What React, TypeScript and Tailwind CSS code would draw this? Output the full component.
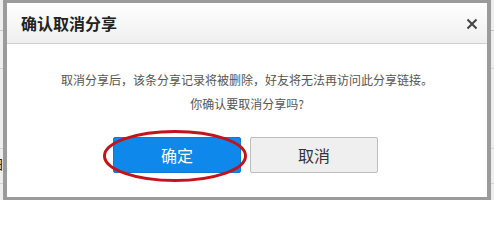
import React from "react";

function Strip({ left }: { left?: boolean }) {
  return (
    <div className="w-[3px] h-[200px] flex flex-col bg-[#eeeeee] relative overflow-hidden">
      <div className="h-[30px]" />
      <div className="h-px bg-[#c8c8c8]" />
      <div className="h-[37px]" />
      <div className="h-px bg-[#d4d4d4]" />
      <div className="h-[79px]" />
      <div className="h-px bg-[#d4d4d4]" />
      <div className="h-[34px]" />
      <div className="h-px bg-[#d4d4d4]" />
      {left && (
        <span className="absolute left-[-9px] top-[157px] text-[13px] leading-none text-[#222]">日</span>
      )}
    </div>
  );
}

export default function App() {
  return (
    <div
      className="w-[494px] h-[200px] bg-[#ececec] flex overflow-hidden"
      style={{ fontFamily: '"Microsoft YaHei", "Noto Sans CJK SC", sans-serif' }}
    >
      <Strip left />
      <div className="flex-1 flex flex-col border-x-[4px] border-t-[3px] border-b-[3px] border-[#9b9b9b] bg-white">
        <div className="h-[41px] flex items-center justify-between pl-[14px] pr-[9px] bg-gradient-to-b from-white to-[#efefef] border-b border-[#cfcfcf]">
          <span className="text-[16px] font-bold text-[#222] leading-none">确认取消分享</span>
          <svg width="12" height="12" viewBox="0 0 12 12" className="mt-[1px]">
            <path d="M1.5 1.5 L10.5 10.5 M10.5 1.5 L1.5 10.5" stroke="#444" strokeWidth="2" />
          </svg>
        </div>
        <div className="flex-1 flex flex-col items-center pt-[24px]">
          <p className="text-[12px] leading-[24px] text-[#555]">
            取消分享后，该条分享记录将被删除，好友将无法再访问此分享链接。
          </p>
          <p className="text-[12px] leading-[24px] text-[#555]">你确认要取消分享吗?</p>
          <div className="mt-[21px] flex gap-[9px] pr-[3px]">
            <div className="relative">
              <button className="w-[128px] h-[36px] bg-[#0f88eb] border border-[#0b7cd9] rounded-[2px] text-white text-[16px]">
                确定
              </button>
              <svg
                className="absolute left-[-11px] top-[-7px] pointer-events-none"
                width="146"
                height="54"
                viewBox="0 0 146 54"
              >
                <ellipse cx="73" cy="26" rx="70.5" ry="24.5" fill="none" stroke="#c3141c" strokeWidth="3" />
              </svg>
            </div>
            <button className="w-[128px] h-[36px] bg-[#efefef] border border-[#bdbdbd] rounded-[2px] text-[#333] text-[16px]">
              取消
            </button>
          </div>
        </div>
      </div>
      <Strip />
    </div>
  );
}
